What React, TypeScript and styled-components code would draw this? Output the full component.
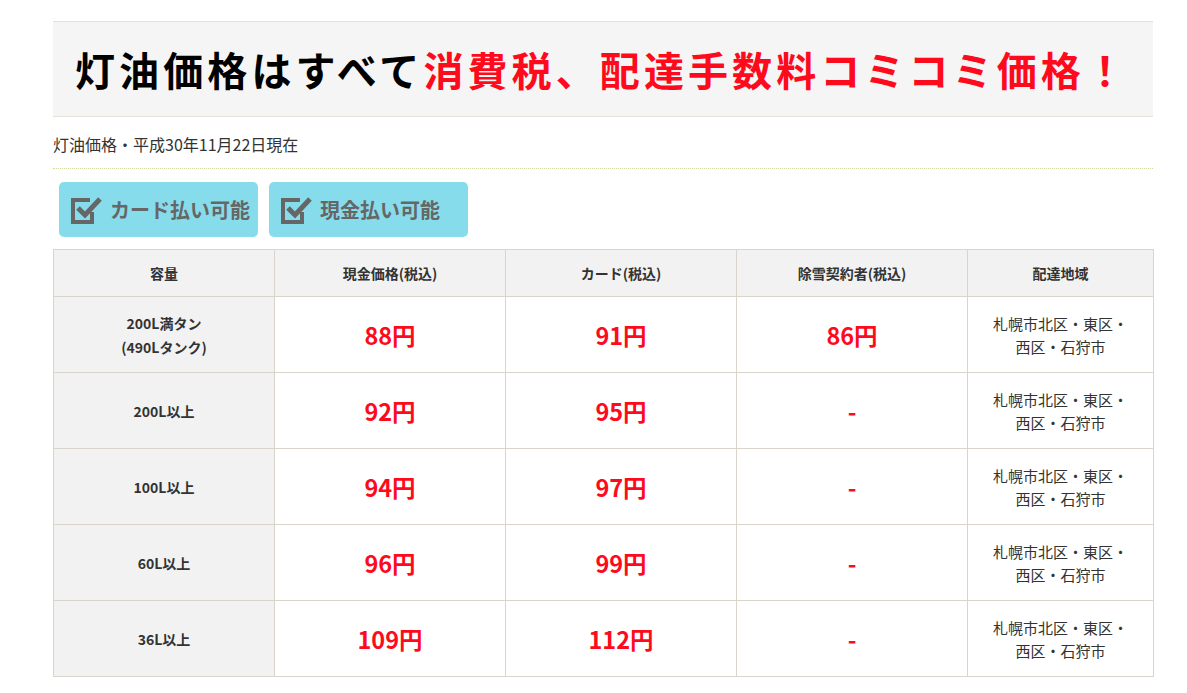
import React from "react";
import styled, { createGlobalStyle } from "styled-components";

const Global = createGlobalStyle`
  html, body { margin: 0; padding: 0; background: #fff; }
  body { font-family: "Noto Sans CJK JP", "Noto Sans", sans-serif; color: #333; }
`;

const Page = styled.div`
  width: 1100px;
  padding: 21px 0 0 53px;
`;

const Banner = styled.div`
  background: #f5f5f5;
  border-top: 1px solid #e6e2da;
  border-bottom: 1px solid #e6e2da;
  height: 94px;
  display: flex;
  align-items: center;
  padding-left: 22px;
`;

const Heading = styled.h1`
  margin: 0;
  font-size: 40px;
  font-weight: 700;
  letter-spacing: 4.1px;
  color: #000;
  line-height: 1;
`;

const Red = styled.span`
  color: #fe0a1d;
`;

const DateLine = styled.div`
  margin-top: 16px;
  font-size: 16px;
  line-height: 22px;
  color: #333;
  padding-bottom: 13px;
  border-bottom: 1px dotted #cfd8a0;
`;

const Buttons = styled.div`
  display: flex;
  gap: 11px;
  padding: 13px 0 0 6px;
`;

const PayBadge = styled.div`
  width: 199px;
  height: 55px;
  border-radius: 5px;
  background: #87dcec;
  display: flex;
  align-items: center;
  gap: 4px;
  padding-left: 11px;
  box-sizing: border-box;
  color: #666;
  font-size: 20px;
  font-weight: 700;
`;

const Table = styled.table`
  margin-top: 12px;
  width: 1100px;
  border-collapse: collapse;
  table-layout: fixed;
`;

const Th = styled.th`
  background: #f2f2f2;
  border: 1px solid #d9d5cd;
  height: 46px;
  font-size: 14px;
  font-weight: 700;
  color: #333;
  padding: 0;
`;

const Label = styled.td`
  background: #f2f2f2;
  border: 1px solid #d9d5cd;
  height: 75px;
  text-align: center;
  font-size: 14px;
  font-weight: 700;
  line-height: 24px;
  color: #333;
  padding: 0;
`;

const Price = styled.td`
  border: 1px solid #d9d5cd;
  text-align: center;
  font-size: 23.5px;
  font-weight: 700;
  color: #fe0a1d;
  padding: 0;
`;

const Area = styled.td`
  border: 1px solid #d9d5cd;
  text-align: center;
  font-size: 15px;
  line-height: 23px;
  color: #333;
  padding: 0 8px;
`;

const CheckIcon = () => (
  <svg width="36" height="30" viewBox="0 0 36 30">
    <path d="M18 5 H3 V27 H22 V19" fill="none" stroke="#666" strokeWidth="4" strokeLinecap="square" />
    <path d="M8 13 L15 20 L30 4" fill="none" stroke="#666" strokeWidth="5" strokeLinejoin="miter" />
  </svg>
);

const rows = [
  { label: ["200L満タン", "(490Lタンク)"], cash: "88円", card: "91円", snow: "86円" },
  { label: ["200L以上"], cash: "92円", card: "95円", snow: "-" },
  { label: ["100L以上"], cash: "94円", card: "97円", snow: "-" },
  { label: ["60L以上"], cash: "96円", card: "99円", snow: "-" },
  { label: ["36L以上"], cash: "109円", card: "112円", snow: "-" },
];

export default function App() {
  return (
    <>
      <Global />
      <Page>
        <Banner>
          <Heading>
            灯油価格はすべて<Red>消費税、配達手数料コミコミ価格！</Red>
          </Heading>
        </Banner>
        <DateLine>灯油価格・平成30年11月22日現在</DateLine>
        <Buttons>
          <PayBadge>
            <CheckIcon />
            カード払い可能
          </PayBadge>
          <PayBadge>
            <CheckIcon />
            現金払い可能
          </PayBadge>
        </Buttons>
        <Table>
          <colgroup>
            <col style={{ width: 221 }} />
            <col style={{ width: 231 }} />
            <col style={{ width: 231 }} />
            <col style={{ width: 231 }} />
            <col style={{ width: 186 }} />
          </colgroup>
          <thead>
            <tr>
              <Th>容量</Th>
              <Th>現金価格(税込)</Th>
              <Th>カード(税込)</Th>
              <Th>除雪契約者(税込)</Th>
              <Th>配達地域</Th>
            </tr>
          </thead>
          <tbody>
            {rows.map((r, i) => (
              <tr key={i}>
                <Label>
                  {r.label.map((l, j) => (
                    <div key={j}>{l}</div>
                  ))}
                </Label>
                <Price>{r.cash}</Price>
                <Price>{r.card}</Price>
                <Price>{r.snow}</Price>
                <Area>
                  札幌市北区・東区・
                  <br />
                  西区・石狩市
                </Area>
              </tr>
            ))}
          </tbody>
        </Table>
      </Page>
    </>
  );
}
